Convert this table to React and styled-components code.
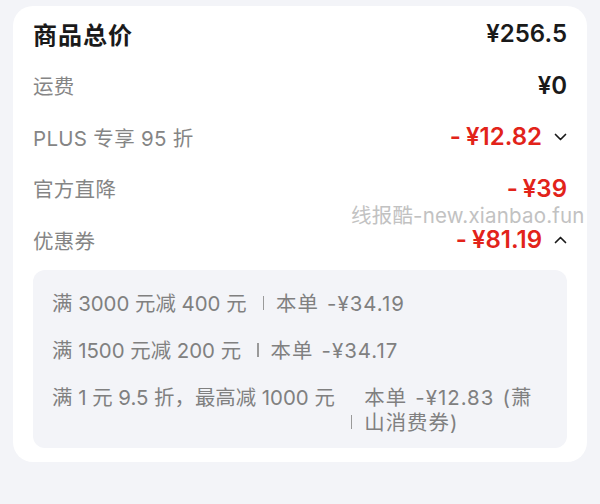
import React from "react";
import styled, { createGlobalStyle } from "styled-components";

const GlobalStyle = createGlobalStyle`
  body {
    margin: 0;
    background: #f3f4f8;
    font-family: "Inter", "Noto Sans CJK SC", sans-serif;
  }
`;

const Page = styled.div`
  padding: 6px 13px 0;
`;

const Card = styled.div`
  position: relative;
  background: #fff;
  border-radius: 20px;
  padding: 2px 20px 14px;
`;

const Row = styled.div`
  height: 51.5px;
  display: flex;
  align-items: center;
  justify-content: space-between;
`;

const Label = styled.span`
  font-size: ${(p) => (p.$title ? "24px" : "20.5px")};
  font-weight: ${(p) => (p.$title ? 700 : 400)};
  letter-spacing: ${(p) => (p.$title ? "1px" : "0.3px")};
  color: ${(p) => (p.$title ? "#1a1a1a" : "#858585")};
`;

const PriceWrap = styled.div`
  display: flex;
  align-items: center;
  gap: 12px;
`;

const Price = styled.span`
  font-size: 24px;
  font-weight: 600;
  color: ${(p) => (p.$red ? "#e2231a" : "#1a1a1a")};
`;

const Minus = styled.span`
  margin-right: 5px;
`;

const Chevron = styled.svg`
  width: 13px;
  height: 8px;
  display: block;
`;

const Watermark = styled.div`
  position: absolute;
  left: 338px;
  top: 200px;
  font-size: 20.5px;
  line-height: 20px;
  letter-spacing: 0.2px;
  color: #c2c2c2;
  white-space: nowrap;
  pointer-events: none;
`;

const Panel = styled.div`
  margin-top: 4.5px;
  background: #f3f4f8;
  border-radius: 12px;
  padding: 20.5px 18px 13.5px 19px;
  display: flex;
  flex-direction: column;
  gap: 22px;
`;

const Coupon = styled.div`
  display: flex;
  font-size: 20.4px;
  line-height: 25px;
  color: #808080;
`;

const Cond = styled.span`
  white-space: nowrap;
  flex-shrink: 0;
`;

const Sep = styled.span`
  align-self: flex-end;
  width: 1.5px;
  height: 14px;
  margin: 0 12px 5.5px 16px;
  background: #9a9a9a;
  flex-shrink: 0;
`;

const Detail = styled.span`
  flex: 1;
  letter-spacing: 1px;
  word-spacing: 1.5px;
`;

const ChevronIcon = ({ up }) => (
  <Chevron viewBox="0 0 13 8">
    <polyline
      points={up ? "1.5,6.5 6.5,1.5 11.5,6.5" : "1.5,1.5 6.5,6.5 11.5,1.5"}
      fill="none"
      stroke="#1a1a1a"
      strokeWidth="1.7"
      strokeLinecap="round"
      strokeLinejoin="round"
    />
  </Chevron>
);

const rows = [
  { label: "运费", price: "¥0" },
  { label: "PLUS 专享 95 折", price: "¥12.82", red: true, chevron: "down" },
  { label: "官方直降", price: "¥39", red: true },
  { label: "优惠券", price: "¥81.19", red: true, chevron: "up" },
];

const coupons = [
  { cond: "满 3000 元减 400 元", detail: "本单 -¥34.19" },
  { cond: "满 1500 元减 200 元", detail: "本单 -¥34.17" },
  { cond: "满 1 元 9.5 折，最高减 1000 元", detail: "本单 -¥12.83 (萧山消费券)" },
];

const App = () => {
  return (
    <Page>
      <GlobalStyle />
      <Card>
        <Row>
          <Label $title>商品总价</Label>
          <Price>¥256.5</Price>
        </Row>
        {rows.map((r) => (
          <Row key={r.label}>
            <Label>{r.label}</Label>
            <PriceWrap>
              <Price $red={r.red}>
                {r.red && <Minus>-</Minus>}
                {r.price}
              </Price>
              {r.chevron && <ChevronIcon up={r.chevron === "up"} />}
            </PriceWrap>
          </Row>
        ))}
        <Watermark>线报酷-new.xianbao.fun</Watermark>
        <Panel>
          {coupons.map((c) => (
            <Coupon key={c.cond}>
              <Cond>{c.cond}</Cond>
              <Sep />
              <Detail>{c.detail}</Detail>
            </Coupon>
          ))}
        </Panel>
      </Card>
    </Page>
  );
};

export default App;
